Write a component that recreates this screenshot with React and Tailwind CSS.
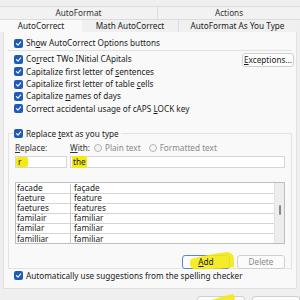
import React from "react";

const U = ({ children }) => <span className="underline underline-offset-[1px]">{children}</span>;

const Check = () => (
  <span className="w-[9px] h-[9px] rounded-[2px] bg-[#1f5cb8] flex items-center justify-center shrink-0">
    <svg width="7" height="7" viewBox="0 0 10 10" fill="none">
      <path d="M2 5.2 L4.2 7.4 L8.2 2.8" stroke="white" strokeWidth="1.5" strokeLinecap="round" strokeLinejoin="round" />
    </svg>
  </span>
);

const CheckRow = ({ children, className = "" }) => (
  <div className={`flex items-center gap-[3px] h-[12.3px] ${className}`}>
    <Check />
    <span>{children}</span>
  </div>
);

const Radio = () => (
  <span className="w-[8px] h-[8px] rounded-full border border-[#b5b5b5] bg-[#f5f5f5] shrink-0" />
);

const rows = [
  ["facade", "façade"],
  ["faeture", "feature"],
  ["faetures", "features"],
  ["familair", "familiar"],
  ["familar", "familiar"],
  ["familliar", "familiar"],
];

export default function App() {
  return (
    <div
      className="w-[300px] h-[300px] bg-[#efefef] overflow-hidden text-[8.2px] text-[#1b1b1b] leading-none"
      style={{ fontFamily: "'Noto Sans', 'Open Sans', sans-serif" }}
    >
      {/* tab rows */}
      <div className="pt-[6px]">
        <div className="flex h-[13px] border-t border-[#dcdcdc] bg-[#f2f2f2]">
          <div className="w-[158px] flex items-center justify-center border-r border-[#dcdcdc] text-[#333]">AutoFormat</div>
          <div className="flex-1 flex items-center justify-center text-[#333]">Actions</div>
        </div>
        <div className="flex h-[13px] border-t border-[#dcdcdc]">
          <div className="w-[82px] flex items-center justify-center bg-[#f9f9f9]">AutoCorrect</div>
          <div className="w-[97px] flex items-center justify-center bg-[#f0f0f0] border-r border-[#dcdcdc]">Math AutoCorrect</div>
          <div className="w-[117px] flex items-center justify-center bg-[#f0f0f0]">AutoFormat As You Type</div>
        </div>
      </div>

      {/* panel */}
      <div className="mx-[3px] h-[257px] bg-[#f9f9f9] border-x border-b border-[#e0e0e0] px-[10px] pt-[5px]">
        <CheckRow>Sh<U>o</U>w AutoCorrect Options buttons</CheckRow>
        <div className="h-px bg-[#e2e2e2] -mx-[6px] mt-[1px]" />
        <div className="flex justify-between">
          <div className="pt-[2px]">
            <CheckRow>Co<U>r</U>rect TWo INitial CApitals</CheckRow>
            <CheckRow>Capitalize first letter of <U>s</U>entences</CheckRow>
            <CheckRow>Capitalize first letter of table <U>c</U>ells</CheckRow>
            <CheckRow>Capitalize <U>n</U>ames of days</CheckRow>
            <CheckRow>Correct accidental usage of cAPS <U>L</U>OCK key</CheckRow>
          </div>
          <div className="pt-[2px] -mr-[8px]">
            <div className="w-[52px] h-[14px] rounded-[3px] border border-[#d0d0d0] bg-[#fdfdfd] flex items-center justify-center">
              <span><U>E</U>xceptions...</span>
            </div>
          </div>
        </div>

        {/* group box */}
        <div className="mt-[18px] -mx-[6px] h-[136px] border border-[#e3e3e3] px-[6px] relative">
          <div className="absolute -top-[6px] left-[5px] bg-[#f9f9f9] pr-[2px]">
            <CheckRow>Replace <U>t</U>ext as you type</CheckRow>
          </div>
          <div className="pt-[8px] flex items-center h-[20px]">
            <span className="w-[55px] text-[#333]"><U>R</U>eplace:</span>
            <span className="text-[#333]"><U>W</U>ith:</span>
            <span className="ml-[4px] flex items-center gap-[3px] text-[#8a8a8a]"><Radio />Plain text</span>
            <span className="ml-[8px] flex items-center gap-[3px] text-[#8a8a8a]"><Radio />Formatted text</span>
          </div>
          <div className="flex gap-[3px] mt-[2px]">
            <div className="w-[52px] h-[12px] border border-[#d6d6d6] bg-white flex items-center">
              <span className="bg-[#f3ea12] h-[10px] w-[12px] flex items-center pl-[2px] rounded-[2px]">r</span>
            </div>
            <div className="flex-1 h-[12px] border border-[#d6d6d6] bg-white flex items-center pl-[1px]">
              <span className="bg-[#f3ea12] h-[12px] flex items-center px-[1px] rounded-[2px]">the</span>
            </div>
          </div>
          <div className="mt-[14px] flex border border-[#bdbdbd] bg-white h-[62px]">
            <div className="flex-1 pt-[1px]">
              {rows.map(([a, b]) => (
                <div key={a} className="flex h-[10px] border-b border-[#d4d4d4] last:border-b-0">
                  <div className="w-[55px] border-r border-[#c8c8c8] flex items-center pl-[1px]">{a}</div>
                  <div className="flex-1 flex items-center pl-[3px]">{b}</div>
                </div>
              ))}
            </div>
            <div className="w-[10px] bg-[#ededed] border-l border-[#e2e2e2] relative">
              <div className="absolute left-[4px] top-[22px] w-[1.5px] h-[10px] bg-[#8a8a8a] rounded-full" />
            </div>
          </div>
          <div className="flex justify-end gap-[7px] mt-[11px] relative">
            <div className="w-[48px] h-[14px] rounded-[3px] border border-[#5a86c8] bg-[#fbfbfb] flex items-center justify-center relative">
              <span className="relative z-10"><U>A</U>dd</span>
            </div>
            <div className="w-[48px] h-[14px] rounded-[3px] border border-[#d0d0d0] bg-[#fbfbfb] flex items-center justify-center text-[#8a8a8a]">
              Delete
            </div>
            <svg className="absolute left-[172px] -top-[5px]" width="56" height="22" viewBox="0 0 56 22">
              <path d="M4 9 Q18 5 40 2 Q47 3 47 9 L47 17 Q30 20 6 19 Q1 15 4 9 Z" fill="#f3ea12" opacity="0.9" />
            </svg>
          </div>
        </div>
        <CheckRow className="mt-[1px]">Automatically use suggestions from the spelling checker</CheckRow>
      </div>
      <div className="flex gap-[7px] ml-[197px] mt-[7px] relative">
        <div className="w-[48px] h-[10px] rounded-[3px] border border-[#d0d0d0] bg-[#fbfbfb]" />
        <div className="w-[48px] h-[10px] rounded-[3px] border border-[#d0d0d0] bg-[#fbfbfb]" />
        <svg className="absolute left-[10px] -top-[5px]" width="30" height="12" viewBox="0 0 30 12">
          <path d="M2 10 Q12 6 26 3 Q29 5 27 12 L4 12 Z" fill="#f3ea12" opacity="0.9" />
        </svg>
      </div>
    </div>
  );
}
